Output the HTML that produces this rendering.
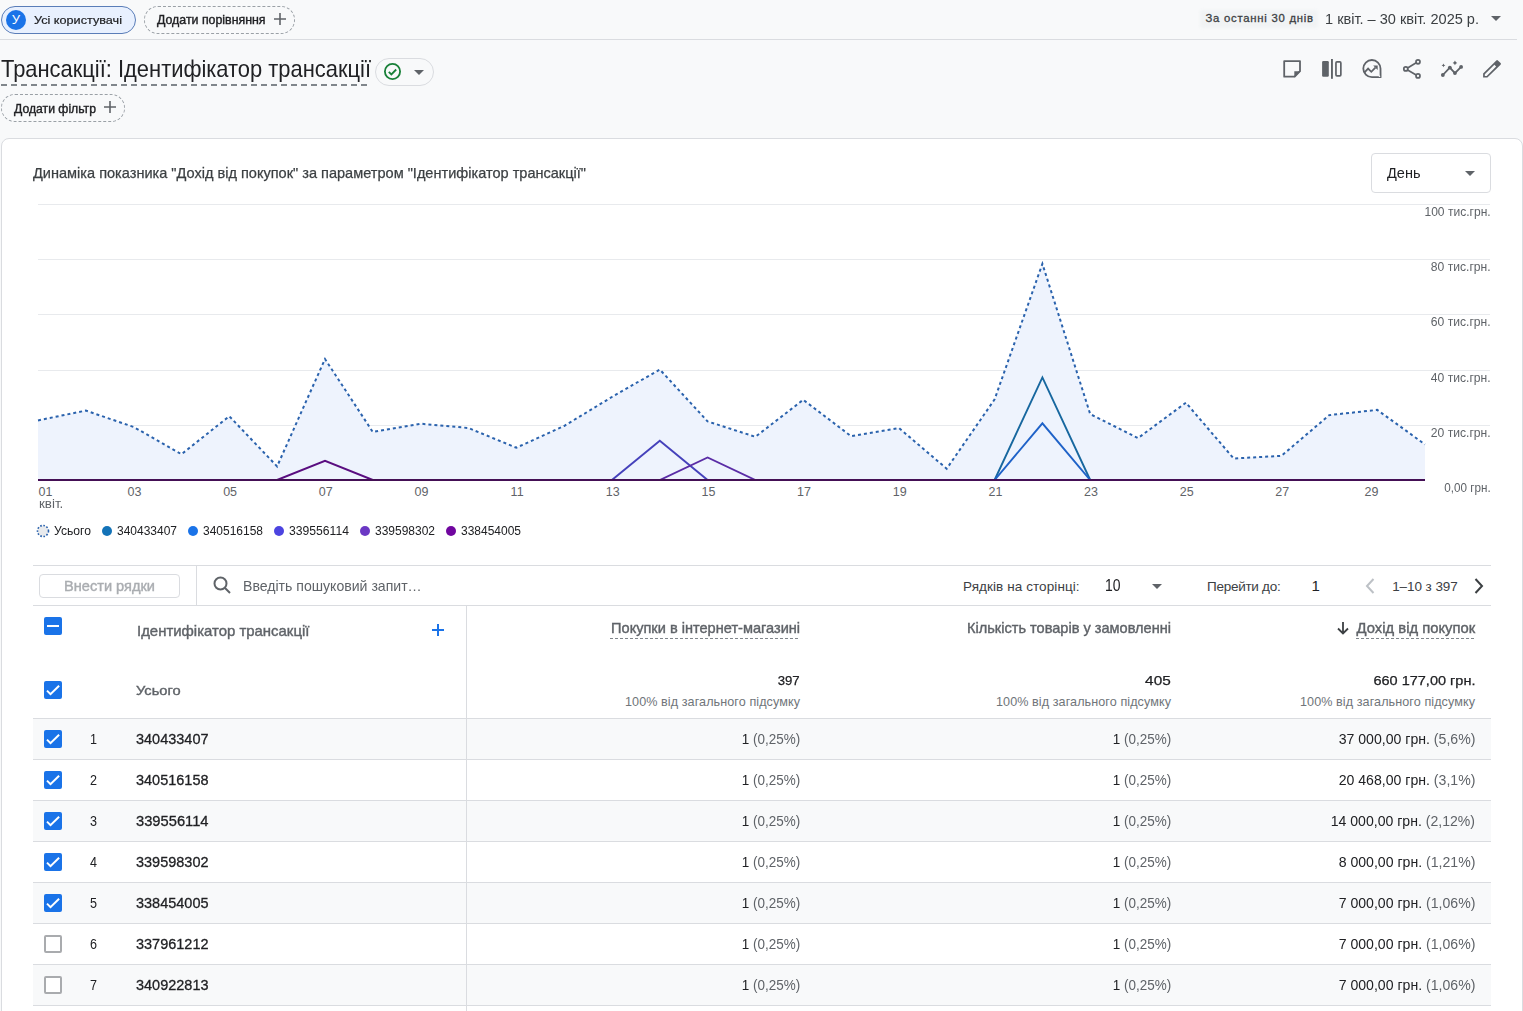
<!DOCTYPE html>
<html><head><meta charset="utf-8"><style>
*{box-sizing:border-box;margin:0;padding:0}
html,body{width:1523px;height:1011px;overflow:hidden;background:#f8f9fa;font-family:"Liberation Sans",sans-serif;color:#202124}
.a{position:absolute;white-space:nowrap}
.chipd{position:absolute;border:1px dashed #9aa0a6;border-radius:14px}
.cb{position:absolute;left:44px;width:18px;height:18px;border-radius:2px;background:#1a73e8}
.cbo{position:absolute;left:44px;width:18px;height:18px;border-radius:2px;border:2px solid #a9abae;background:#fff}
</style></head><body>
<div class="a" style="left:1px;top:6px;width:135px;height:28px;border:1px solid #5a7db8;border-radius:14px;background:#e8f0fe"></div>
<div class="a" style="left:6px;top:10px;width:20px;height:20px;border-radius:50%;background:#1a73e8"></div>
<div class="a" style="left:16px;transform:translateX(-50%);top:13px;font-size:13px;line-height:13px;color:#fff;font-weight:normal;">У</div>
<div class="a" style="left:34px;top:15px;font-size:11.5px;line-height:11.5px;color:#202124;font-weight:normal;transform:scaleX(1.1002);transform-origin:left center;-webkit-text-stroke:0.4px #202124;-webkit-text-stroke:0.2px #202124;">Усі користувачі</div>
<div class="chipd" style="left:144px;top:6px;width:151px;height:28px"></div>
<div class="a" style="left:157px;top:14px;font-size:12.8px;line-height:12.8px;color:#202124;font-weight:normal;transform:scaleX(0.9654);transform-origin:left center;-webkit-text-stroke:0.4px #202124;">Додати порівняння</div>
<svg class="a" style="left:273px;top:12px" width="14" height="14" viewBox="0 0 14 14"><path d="M7 1v12M1 7h12" stroke="#5f6368" stroke-width="1.6"/></svg>
<div class="a" style="left:0;top:39px;width:1517px;height:1px;background:#dadce0"></div>
<div class="a" style="left:1200px;top:10px;width:118px;height:18px;background:#f1f3f4;border-radius:3px;filter:blur(1.5px)"></div>
<div class="a" style="left:1205.5px;top:13px;font-size:11.3px;line-height:11.3px;color:#3c4043;font-weight:normal;letter-spacing:0.754px;-webkit-text-stroke:0.4px #3c4043;-webkit-text-stroke:0.3px #3c4043;">За останні 30 днів</div>
<div class="a" style="left:1324.5px;top:12px;font-size:14.5px;line-height:14.5px;color:#3c4043;font-weight:normal;transform:scaleX(1.0036);transform-origin:left center;">1 квіт. – 30 квіт. 2025 р.</div>
<svg class="a" style="left:1491px;top:16px" width="10" height="5" viewBox="0 0 10 5"><path d="M0 0h10L5 5z" fill="#5f6368"/></svg>
<div class="a" style="left:1px;top:57px;font-size:24px;line-height:24px;color:#202124;font-weight:normal;transform:scaleX(0.9126);transform-origin:left center;">Трансакції: Ідентифікатор трансакції</div>
<div class="a" style="left:1px;top:84px;width:370px;height:2px;background:repeating-linear-gradient(90deg,#80868b 0 6px,transparent 6px 10px)"></div>
<div class="a" style="left:375px;top:58px;width:59px;height:28px;border:1px solid #dadce0;border-radius:14px"></div>
<svg class="a" style="left:383px;top:62px" width="19" height="19" viewBox="0 0 20 20"><circle cx="10" cy="10" r="8" fill="none" stroke="#188038" stroke-width="1.9"/><path d="M6.1 10.3l2.7 2.7 5.1-5.1" fill="none" stroke="#188038" stroke-width="1.9"/></svg>
<svg class="a" style="left:414px;top:70px" width="10" height="5" viewBox="0 0 10 5"><path d="M0 0h10L5 5z" fill="#5f6368"/></svg>
<div class="chipd" style="left:1px;top:94px;width:124px;height:28px"></div>
<div class="a" style="left:14px;top:102px;font-size:13px;line-height:13px;color:#202124;font-weight:normal;transform:scaleX(0.9385);transform-origin:left center;-webkit-text-stroke:0.4px #202124;">Додати фільтр</div>
<svg class="a" style="left:103px;top:100px" width="14" height="14" viewBox="0 0 14 14"><path d="M7 1v12M1 7h12" stroke="#5f6368" stroke-width="1.6"/></svg>
<svg class="a" style="left:1280px;top:56px" width="24" height="24" viewBox="0 0 24 24"><path d="M4.2 5.1H20V15.2L14.7 20.7H4.2Z" fill="none" stroke="#5f6368" stroke-width="1.8" stroke-linejoin="round"/><path d="M14.3 15.2H20.6L14.3 21.5Z" fill="#5f6368"/></svg>
<svg class="a" style="left:1320px;top:56px" width="24" height="24" viewBox="0 0 24 24"><rect x="2.1" y="5.1" width="6.7" height="15.6" rx="1.2" fill="#5f6368"/><rect x="11" y="3" width="1.9" height="19.8" fill="#5f6368"/><rect x="15.95" y="5.95" width="4.9" height="13.9" rx="1" fill="none" stroke="#5f6368" stroke-width="1.7"/></svg>
<svg class="a" style="left:1360px;top:56px" width="24" height="24" viewBox="0 0 24 24"><path d="M20.5 12.6A8.6 8.6 0 1 0 11.9 21.2H20.6Z" fill="none" stroke="#5f6368" stroke-width="1.8" stroke-linejoin="round"/><path d="M4.3 16.6L8.1 12.6 11.3 15.8 15.4 11.6" fill="none" stroke="#5f6368" stroke-width="1.8"/><path d="M13.2 9.4H17.7V13.9Z" fill="#5f6368"/><circle cx="19.5" cy="20.3" r="0.8" fill="#fff"/></svg>
<svg class="a" style="left:1400px;top:56px" width="24" height="24" viewBox="0 0 24 24"><circle cx="18" cy="5.8" r="2" fill="none" stroke="#5f6368" stroke-width="1.7"/><circle cx="5.8" cy="12.9" r="2" fill="none" stroke="#5f6368" stroke-width="1.7"/><circle cx="18" cy="19.9" r="2" fill="none" stroke="#5f6368" stroke-width="1.7"/><path d="M7.6 11.9L16.2 6.8M7.6 13.9L16.2 18.9" stroke="#5f6368" stroke-width="1.7"/></svg>
<svg class="a" style="left:1440px;top:56px" width="24" height="24" viewBox="0 0 24 24"><path d="M2.85 19L9.85 11.6 14.95 17.1 21.1 10.9" fill="none" stroke="#5f6368" stroke-width="1.8"/><circle cx="2.85" cy="19" r="1.9" fill="#5f6368"/><circle cx="9.85" cy="11.6" r="1.9" fill="#5f6368"/><circle cx="14.95" cy="17.1" r="1.9" fill="#5f6368"/><circle cx="21.1" cy="10.9" r="1.9" fill="#5f6368"/><path d="M14.95 4.6Q15.5 6.35 17.25 6.9Q15.5 7.45 14.95 9.2Q14.4 7.45 12.65 6.9Q14.4 6.35 14.95 4.6Z" fill="#5f6368"/><path d="M3.45 7.5Q3.7 9.15 5.35 9.4Q3.7 9.65 3.45 11.3Q3.2 9.65 1.55 9.4Q3.2 9.15 3.45 7.5Z" fill="#5f6368"/></svg>
<svg class="a" style="left:1480px;top:56px" width="24" height="24" viewBox="0 0 24 24"><path fill-rule="evenodd" d="M3.1 17.6L16.3 4.4Q17.1 3.6 17.9 4.4L20.6 7.1Q21.4 7.9 20.6 8.7L7.4 21.6H3.1ZM4.8 19.9V18.25L14.375 8.675L16.15 10.45L6.7 19.9Z" fill="#5f6368"/></svg>
<div class="a" style="left:1px;top:138px;width:1522px;height:900px;background:#fff;border:1px solid #dadce0;border-radius:8px"></div>
<div class="a" style="left:33px;top:165px;font-size:15px;line-height:15px;color:#3c4043;font-weight:normal;transform:scaleX(0.9696);transform-origin:left center;-webkit-text-stroke:0.4px #3c4043;-webkit-text-stroke:0.25px #3c4043;">Динаміка показника "Дохід від покупок" за параметром "Ідентифікатор трансакції"</div>
<div class="a" style="left:1371px;top:153px;width:120px;height:40px;border:1px solid #dadce0;border-radius:4px"></div>
<div class="a" style="left:1387px;top:165px;font-size:15.5px;line-height:15.5px;color:#202124;font-weight:normal;transform:scaleX(0.9367);transform-origin:left center;">День</div>
<svg class="a" style="left:1465px;top:171px" width="10" height="5" viewBox="0 0 10 5"><path d="M0 0h10L5 5z" fill="#5f6368"/></svg>
<svg class="a" style="left:0;top:0" width="1523" height="560"><line x1="38" y1="204.5" x2="1490" y2="204.5" stroke="#e8eaed" stroke-width="1"/><line x1="38" y1="259.5" x2="1490" y2="259.5" stroke="#e8eaed" stroke-width="1"/><line x1="38" y1="314.5" x2="1490" y2="314.5" stroke="#e8eaed" stroke-width="1"/><line x1="38" y1="370.5" x2="1490" y2="370.5" stroke="#e8eaed" stroke-width="1"/><line x1="38" y1="425.5" x2="1490" y2="425.5" stroke="#e8eaed" stroke-width="1"/><polygon points="38,480 38.0,420.4 85.8,410.6 133.7,427.0 181.5,454.2 229.3,416.2 277.1,466.4 325.0,359.0 372.8,432.0 420.6,423.7 468.4,428.0 516.3,447.7 564.1,426.0 611.9,397.0 659.8,369.5 707.6,421.4 755.4,436.8 803.2,399.8 851.1,436.2 898.9,428.0 946.7,468.7 994.6,399.4 1042.4,263.8 1090.2,414.1 1138.0,438.1 1185.9,402.7 1233.7,458.5 1281.5,455.8 1329.3,415.1 1377.2,409.9 1425.0,444.4 1425,480" fill="#eef3fd"/><polyline points="38.0,420.4 85.8,410.6 133.7,427.0 181.5,454.2 229.3,416.2 277.1,466.4 325.0,359.0 372.8,432.0 420.6,423.7 468.4,428.0 516.3,447.7 564.1,426.0 611.9,397.0 659.8,369.5 707.6,421.4 755.4,436.8 803.2,399.8 851.1,436.2 898.9,428.0 946.7,468.7 994.6,399.4 1042.4,263.8 1090.2,414.1 1138.0,438.1 1185.9,402.7 1233.7,458.5 1281.5,455.8 1329.3,415.1 1377.2,409.9 1425.0,444.4" fill="none" stroke="#2a62ad" stroke-width="2" stroke-dasharray="3 3"/><polyline points="38.0,480.0 85.8,480.0 133.7,480.0 181.5,480.0 229.3,480.0 277.1,480.0 325.0,480.0 372.8,480.0 420.6,480.0 468.4,480.0 516.3,480.0 564.1,480.0 611.9,480.0 659.8,480.0 707.6,480.0 755.4,480.0 803.2,480.0 851.1,480.0 898.9,480.0 946.7,480.0 994.6,480.0 1042.4,377.4 1090.2,480.0 1138.0,480.0 1185.9,480.0 1233.7,480.0 1281.5,480.0 1329.3,480.0 1377.2,480.0 1425.0,480.0" fill="none" stroke="#17679f" stroke-width="1.9"/><polyline points="38.0,480.0 85.8,480.0 133.7,480.0 181.5,480.0 229.3,480.0 277.1,480.0 325.0,480.0 372.8,480.0 420.6,480.0 468.4,480.0 516.3,480.0 564.1,480.0 611.9,480.0 659.8,480.0 707.6,480.0 755.4,480.0 803.2,480.0 851.1,480.0 898.9,480.0 946.7,480.0 994.6,480.0 1042.4,423.3 1090.2,480.0 1138.0,480.0 1185.9,480.0 1233.7,480.0 1281.5,480.0 1329.3,480.0 1377.2,480.0 1425.0,480.0" fill="none" stroke="#1f62c8" stroke-width="1.9"/><polyline points="38.0,480.0 85.8,480.0 133.7,480.0 181.5,480.0 229.3,480.0 277.1,480.0 325.0,480.0 372.8,480.0 420.6,480.0 468.4,480.0 516.3,480.0 564.1,480.0 611.9,480.0 659.8,440.8 707.6,480.0 755.4,480.0 803.2,480.0 851.1,480.0 898.9,480.0 946.7,480.0 994.6,480.0 1042.4,480.0 1090.2,480.0 1138.0,480.0 1185.9,480.0 1233.7,480.0 1281.5,480.0 1329.3,480.0 1377.2,480.0 1425.0,480.0" fill="none" stroke="#4541bb" stroke-width="1.9"/><polyline points="38.0,480.0 85.8,480.0 133.7,480.0 181.5,480.0 229.3,480.0 277.1,480.0 325.0,480.0 372.8,480.0 420.6,480.0 468.4,480.0 516.3,480.0 564.1,480.0 611.9,480.0 659.8,480.0 707.6,457.5 755.4,480.0 803.2,480.0 851.1,480.0 898.9,480.0 946.7,480.0 994.6,480.0 1042.4,480.0 1090.2,480.0 1138.0,480.0 1185.9,480.0 1233.7,480.0 1281.5,480.0 1329.3,480.0 1377.2,480.0 1425.0,480.0" fill="none" stroke="#5a2ca6" stroke-width="1.9"/><polyline points="38.0,480.0 85.8,480.0 133.7,480.0 181.5,480.0 229.3,480.0 277.1,480.0 325.0,460.8 372.8,480.0 420.6,480.0 468.4,480.0 516.3,480.0 564.1,480.0 611.9,480.0 659.8,480.0 707.6,480.0 755.4,480.0 803.2,480.0 851.1,480.0 898.9,480.0 946.7,480.0 994.6,480.0 1042.4,480.0 1090.2,480.0 1138.0,480.0 1185.9,480.0 1233.7,480.0 1281.5,480.0 1329.3,480.0 1377.2,480.0 1425.0,480.0" fill="none" stroke="#5a0d80" stroke-width="1.9"/><line x1="38" y1="480" x2="1425" y2="480" stroke="#440f55" stroke-width="2"/></svg>
<div class="a" style="right:32.59999999999991px;top:206px;font-size:12.5px;line-height:12.5px;color:#5f6368;font-weight:normal;transform:scaleX(0.9642);transform-origin:right center;">100 тис.грн.</div>
<div class="a" style="right:32.59999999999991px;top:261px;font-size:12.5px;line-height:12.5px;color:#5f6368;font-weight:normal;transform:scaleX(0.9708);transform-origin:right center;">80 тис.грн.</div>
<div class="a" style="right:32.59999999999991px;top:316px;font-size:12.5px;line-height:12.5px;color:#5f6368;font-weight:normal;transform:scaleX(0.9708);transform-origin:right center;">60 тис.грн.</div>
<div class="a" style="right:32.59999999999991px;top:372px;font-size:12.5px;line-height:12.5px;color:#5f6368;font-weight:normal;transform:scaleX(0.9708);transform-origin:right center;">40 тис.грн.</div>
<div class="a" style="right:32.59999999999991px;top:427px;font-size:12.5px;line-height:12.5px;color:#5f6368;font-weight:normal;transform:scaleX(0.9708);transform-origin:right center;">20 тис.грн.</div>
<div class="a" style="right:32.59999999999991px;top:482px;font-size:12.5px;line-height:12.5px;color:#5f6368;font-weight:normal;transform:scaleX(0.9335);transform-origin:right center;">0,00 грн.</div>
<div class="a" style="left:38.5px;top:486px;font-size:12.5px;line-height:12.5px;color:#5f6368;font-weight:normal;">01</div>
<div class="a" style="left:38.5px;top:498px;font-size:12.5px;line-height:12.5px;color:#5f6368;font-weight:normal;transform:scaleX(1.0703);transform-origin:left center;">квіт.</div>
<div class="a" style="left:134.5px;transform:translateX(-50%);top:486px;font-size:12.5px;line-height:12.5px;color:#5f6368;font-weight:normal;">03</div>
<div class="a" style="left:230.1px;transform:translateX(-50%);top:486px;font-size:12.5px;line-height:12.5px;color:#5f6368;font-weight:normal;">05</div>
<div class="a" style="left:325.8px;transform:translateX(-50%);top:486px;font-size:12.5px;line-height:12.5px;color:#5f6368;font-weight:normal;">07</div>
<div class="a" style="left:421.4px;transform:translateX(-50%);top:486px;font-size:12.5px;line-height:12.5px;color:#5f6368;font-weight:normal;">09</div>
<div class="a" style="left:517.1px;transform:translateX(-50%);top:486px;font-size:12.5px;line-height:12.5px;color:#5f6368;font-weight:normal;">11</div>
<div class="a" style="left:612.7px;transform:translateX(-50%);top:486px;font-size:12.5px;line-height:12.5px;color:#5f6368;font-weight:normal;">13</div>
<div class="a" style="left:708.4px;transform:translateX(-50%);top:486px;font-size:12.5px;line-height:12.5px;color:#5f6368;font-weight:normal;">15</div>
<div class="a" style="left:804.0px;transform:translateX(-50%);top:486px;font-size:12.5px;line-height:12.5px;color:#5f6368;font-weight:normal;">17</div>
<div class="a" style="left:899.7px;transform:translateX(-50%);top:486px;font-size:12.5px;line-height:12.5px;color:#5f6368;font-weight:normal;">19</div>
<div class="a" style="left:995.4px;transform:translateX(-50%);top:486px;font-size:12.5px;line-height:12.5px;color:#5f6368;font-weight:normal;">21</div>
<div class="a" style="left:1091.0px;transform:translateX(-50%);top:486px;font-size:12.5px;line-height:12.5px;color:#5f6368;font-weight:normal;">23</div>
<div class="a" style="left:1186.7px;transform:translateX(-50%);top:486px;font-size:12.5px;line-height:12.5px;color:#5f6368;font-weight:normal;">25</div>
<div class="a" style="left:1282.3px;transform:translateX(-50%);top:486px;font-size:12.5px;line-height:12.5px;color:#5f6368;font-weight:normal;">27</div>
<div class="a" style="left:1371.5px;transform:translateX(-50%);top:486px;font-size:12.5px;line-height:12.5px;color:#5f6368;font-weight:normal;">29</div>
<svg class="a" style="left:36px;top:524px" width="14" height="14" viewBox="0 0 14 14"><circle cx="7" cy="7" r="5.5" fill="#e8eaed" stroke="#2a62ad" stroke-width="1.6" stroke-dasharray="1.6 1.6"/></svg>
<div class="a" style="left:54px;top:525px;font-size:12.5px;line-height:12.5px;color:#202124;font-weight:normal;transform:scaleX(0.9721);transform-origin:left center;">Усього</div>
<div class="a" style="left:102px;top:526px;width:10px;height:10px;border-radius:50%;background:#1373b8"></div>
<div class="a" style="left:117px;top:525px;font-size:12.5px;line-height:12.5px;color:#202124;font-weight:normal;transform:scaleX(0.9588);transform-origin:left center;">340433407</div>
<div class="a" style="left:188px;top:526px;width:10px;height:10px;border-radius:50%;background:#1a73e8"></div>
<div class="a" style="left:203px;top:525px;font-size:12.5px;line-height:12.5px;color:#202124;font-weight:normal;transform:scaleX(0.9588);transform-origin:left center;">340516158</div>
<div class="a" style="left:274px;top:526px;width:10px;height:10px;border-radius:50%;background:#4c44e0"></div>
<div class="a" style="left:289px;top:525px;font-size:12.5px;line-height:12.5px;color:#202124;font-weight:normal;transform:scaleX(0.9734);transform-origin:left center;">339556114</div>
<div class="a" style="left:360px;top:526px;width:10px;height:10px;border-radius:50%;background:#6b38c4"></div>
<div class="a" style="left:375px;top:525px;font-size:12.5px;line-height:12.5px;color:#202124;font-weight:normal;transform:scaleX(0.9588);transform-origin:left center;">339598302</div>
<div class="a" style="left:446px;top:526px;width:10px;height:10px;border-radius:50%;background:#70069f"></div>
<div class="a" style="left:461px;top:525px;font-size:12.5px;line-height:12.5px;color:#202124;font-weight:normal;transform:scaleX(0.9588);transform-origin:left center;">338454005</div>
<div class="a" style="left:33px;top:565px;width:1458px;height:1px;background:#dadce0"></div>
<div class="a" style="left:33px;top:605px;width:1458px;height:1px;background:#dadce0"></div>
<div class="a" style="left:196px;top:565px;width:1px;height:40px;background:#dadce0"></div>
<div class="a" style="left:39px;top:574px;width:141px;height:24px;border:1px solid #dadce0;border-radius:4px"></div>
<div class="a" style="left:64px;top:579px;font-size:14px;line-height:14px;color:#aaadb1;font-weight:normal;transform:scaleX(1.0422);transform-origin:left center;-webkit-text-stroke:0.4px #aaadb1;">Внести рядки</div>
<svg class="a" style="left:212px;top:575px" width="20" height="20" viewBox="0 0 20 20"><circle cx="8.5" cy="8.5" r="6" fill="none" stroke="#5f6368" stroke-width="2"/><path d="M13 13l5 5" stroke="#5f6368" stroke-width="2"/></svg>
<div class="a" style="left:243.3px;top:578px;font-size:15px;line-height:15px;color:#5f6368;font-weight:normal;transform:scaleX(0.9390);transform-origin:left center;">Введіть пошуковий запит…</div>
<div class="a" style="left:963px;top:580px;font-size:13.5px;line-height:13.5px;color:#3c4043;font-weight:normal;letter-spacing:0.087px;">Рядків на сторінці:</div>
<div class="a" style="left:1104.7px;top:578px;font-size:16px;line-height:16px;color:#202124;font-weight:normal;transform:scaleX(0.8709);transform-origin:left center;">10</div>
<svg class="a" style="left:1152px;top:584px" width="10" height="5" viewBox="0 0 10 5"><path d="M0 0h10L5 5z" fill="#5f6368"/></svg>
<div class="a" style="left:1207px;top:580px;font-size:13.5px;line-height:13.5px;color:#3c4043;font-weight:normal;letter-spacing:-0.269px;">Перейти до:</div>
<div class="a" style="left:1311.5px;top:578px;font-size:15px;line-height:15px;color:#202124;font-weight:normal;">1</div>
<svg class="a" style="left:1364px;top:577px" width="12" height="18" viewBox="0 0 12 18"><path d="M9.5 2L3 9l6.5 7" fill="none" stroke="#bdc1c6" stroke-width="2"/></svg>
<div class="a" style="left:1392.2px;top:580px;font-size:13.5px;line-height:13.5px;color:#3c4043;font-weight:normal;letter-spacing:-0.072px;">1–10 з 397</div>
<svg class="a" style="left:1473px;top:577px" width="12" height="18" viewBox="0 0 12 18"><path d="M2.5 2L9 9l-6.5 7" fill="none" stroke="#3c4043" stroke-width="2"/></svg>
<div class="cb" style="top:617px"><div style="position:absolute;left:3px;top:8px;width:12px;height:2px;background:#fff"></div></div>
<div class="a" style="left:136.6px;top:623px;font-size:15px;line-height:15px;color:#5f6368;font-weight:normal;transform:scaleX(0.9950);transform-origin:left center;-webkit-text-stroke:0.4px #5f6368;">Ідентифікатор трансакції</div>
<svg class="a" style="left:431px;top:623px" width="14" height="14" viewBox="0 0 14 14"><path d="M7 1v12M1 7h12" stroke="#1a73e8" stroke-width="2"/></svg>
<div class="a" style="right:723px;top:621px;font-size:14.5px;line-height:14.5px;color:#5f6368;font-weight:normal;transform:scaleX(1.0049);transform-origin:right center;-webkit-text-stroke:0.4px #5f6368;">Покупки в інтернет-магазині</div>
<div class="a" style="left:610px;top:638px;width:190px;height:1px;background:repeating-linear-gradient(90deg,#80868b 0 3px,transparent 3px 5px)"></div>
<div class="a" style="right:352px;top:621px;font-size:14.5px;line-height:14.5px;color:#5f6368;font-weight:normal;transform:scaleX(1.0047);transform-origin:right center;-webkit-text-stroke:0.4px #5f6368;">Кількість товарів у замовленні</div>
<div class="a" style="right:48px;top:621px;font-size:14.5px;line-height:14.5px;color:#5f6368;font-weight:normal;transform:scaleX(1.0206);transform-origin:right center;-webkit-text-stroke:0.4px #5f6368;">Дохід від покупок</div>
<div class="a" style="left:1356px;top:638px;width:119px;height:1px;background:repeating-linear-gradient(90deg,#80868b 0 3px,transparent 3px 5px)"></div>
<svg class="a" style="left:1336px;top:621px" width="14" height="14" viewBox="0 0 14 14"><path d="M7 1v11M2 7.5l5 5 5-5" fill="none" stroke="#3c4043" stroke-width="1.8"/></svg>
<div class="cb" style="top:681px"><svg style="position:absolute;left:0;top:0" width="18" height="18" viewBox="0 0 18 18"><path d="M3 9.6l3.5 3.5 8.6-8.4" fill="none" stroke="#fff" stroke-width="2"/></svg></div>
<div class="a" style="left:136.4px;top:684px;font-size:13.4px;line-height:13.4px;color:#5f6368;font-weight:normal;transform:scaleX(1.0936);transform-origin:left center;-webkit-text-stroke:0.4px #5f6368;">Усього</div>
<div class="a" style="right:723px;top:674px;font-size:13px;line-height:13px;color:#202124;font-weight:normal;transform:scaleX(1.0137);transform-origin:right center;-webkit-text-stroke:0.4px #202124;-webkit-text-stroke:0.25px #202124;">397</div>
<div class="a" style="right:723px;top:696px;font-size:12.6px;line-height:12.6px;color:#70757a;font-weight:normal;letter-spacing:0.079px;margin-right:-0.079px;">100% від загального підсумку</div>
<div class="a" style="right:352px;top:674px;font-size:13px;line-height:13px;color:#202124;font-weight:normal;transform:scaleX(1.1796);transform-origin:right center;-webkit-text-stroke:0.4px #202124;-webkit-text-stroke:0.25px #202124;">405</div>
<div class="a" style="right:352px;top:696px;font-size:12.6px;line-height:12.6px;color:#70757a;font-weight:normal;letter-spacing:0.079px;margin-right:-0.079px;">100% від загального підсумку</div>
<div class="a" style="right:48px;top:674px;font-size:13px;line-height:13px;color:#202124;font-weight:normal;transform:scaleX(1.1153);transform-origin:right center;-webkit-text-stroke:0.4px #202124;-webkit-text-stroke:0.25px #202124;">660 177,00 грн.</div>
<div class="a" style="right:48px;top:696px;font-size:12.6px;line-height:12.6px;color:#70757a;font-weight:normal;letter-spacing:0.079px;margin-right:-0.079px;">100% від загального підсумку</div>
<div class="a" style="left:33px;top:718px;width:1458px;height:1px;background:#dadce0"></div>
<div class="a" style="left:33px;top:719px;width:1458px;height:40px;background:#f8f9fa"></div>
<div class="a" style="left:33px;top:759px;width:1458px;height:1px;background:#dadce0"></div>
<div class="cb" style="top:730px"><svg style="position:absolute;left:0;top:0" width="18" height="18" viewBox="0 0 18 18"><path d="M3 9.6l3.5 3.5 8.6-8.4" fill="none" stroke="#fff" stroke-width="2"/></svg></div>
<div class="a" style="left:89.8px;top:731px;font-size:15.5px;line-height:15.5px;color:#202124;font-weight:normal;transform:scaleX(0.8116);transform-origin:left center;">1</div>
<div class="a" style="left:136.4px;top:731px;font-size:15.5px;line-height:15.5px;color:#202124;font-weight:normal;transform:scaleX(0.9344);transform-origin:left center;-webkit-text-stroke:0.4px #202124;-webkit-text-stroke:0.3px #202124;">340433407</div>
<div class="a" style="right:723px;top:731px;font-size:15.5px;line-height:15.5px;color:#202124;font-weight:normal;transform:scaleX(0.8688);transform-origin:right center;">1 <span style="color:#5f6368">(0,25%)</span></div>
<div class="a" style="right:352px;top:731px;font-size:15.5px;line-height:15.5px;color:#202124;font-weight:normal;transform:scaleX(0.8688);transform-origin:right center;">1 <span style="color:#5f6368">(0,25%)</span></div>
<div class="a" style="right:48px;top:731px;font-size:15.5px;line-height:15.5px;color:#202124;font-weight:normal;transform:scaleX(0.9091);transform-origin:right center;">37 000,00 грн. <span style="color:#5f6368">(5,6%)</span></div>
<div class="a" style="left:33px;top:800px;width:1458px;height:1px;background:#dadce0"></div>
<div class="cb" style="top:771px"><svg style="position:absolute;left:0;top:0" width="18" height="18" viewBox="0 0 18 18"><path d="M3 9.6l3.5 3.5 8.6-8.4" fill="none" stroke="#fff" stroke-width="2"/></svg></div>
<div class="a" style="left:89.8px;top:772px;font-size:15.5px;line-height:15.5px;color:#202124;font-weight:normal;transform:scaleX(0.8116);transform-origin:left center;">2</div>
<div class="a" style="left:136.4px;top:772px;font-size:15.5px;line-height:15.5px;color:#202124;font-weight:normal;transform:scaleX(0.9344);transform-origin:left center;-webkit-text-stroke:0.4px #202124;-webkit-text-stroke:0.3px #202124;">340516158</div>
<div class="a" style="right:723px;top:772px;font-size:15.5px;line-height:15.5px;color:#202124;font-weight:normal;transform:scaleX(0.8688);transform-origin:right center;">1 <span style="color:#5f6368">(0,25%)</span></div>
<div class="a" style="right:352px;top:772px;font-size:15.5px;line-height:15.5px;color:#202124;font-weight:normal;transform:scaleX(0.8688);transform-origin:right center;">1 <span style="color:#5f6368">(0,25%)</span></div>
<div class="a" style="right:48px;top:772px;font-size:15.5px;line-height:15.5px;color:#202124;font-weight:normal;transform:scaleX(0.9091);transform-origin:right center;">20 468,00 грн. <span style="color:#5f6368">(3,1%)</span></div>
<div class="a" style="left:33px;top:801px;width:1458px;height:40px;background:#f8f9fa"></div>
<div class="a" style="left:33px;top:841px;width:1458px;height:1px;background:#dadce0"></div>
<div class="cb" style="top:812px"><svg style="position:absolute;left:0;top:0" width="18" height="18" viewBox="0 0 18 18"><path d="M3 9.6l3.5 3.5 8.6-8.4" fill="none" stroke="#fff" stroke-width="2"/></svg></div>
<div class="a" style="left:89.8px;top:813px;font-size:15.5px;line-height:15.5px;color:#202124;font-weight:normal;transform:scaleX(0.8116);transform-origin:left center;">3</div>
<div class="a" style="left:136.4px;top:813px;font-size:15.5px;line-height:15.5px;color:#202124;font-weight:normal;transform:scaleX(0.9485);transform-origin:left center;-webkit-text-stroke:0.4px #202124;-webkit-text-stroke:0.3px #202124;">339556114</div>
<div class="a" style="right:723px;top:813px;font-size:15.5px;line-height:15.5px;color:#202124;font-weight:normal;transform:scaleX(0.8688);transform-origin:right center;">1 <span style="color:#5f6368">(0,25%)</span></div>
<div class="a" style="right:352px;top:813px;font-size:15.5px;line-height:15.5px;color:#202124;font-weight:normal;transform:scaleX(0.8688);transform-origin:right center;">1 <span style="color:#5f6368">(0,25%)</span></div>
<div class="a" style="right:48px;top:813px;font-size:15.5px;line-height:15.5px;color:#202124;font-weight:normal;transform:scaleX(0.9075);transform-origin:right center;">14 000,00 грн. <span style="color:#5f6368">(2,12%)</span></div>
<div class="a" style="left:33px;top:882px;width:1458px;height:1px;background:#dadce0"></div>
<div class="cb" style="top:853px"><svg style="position:absolute;left:0;top:0" width="18" height="18" viewBox="0 0 18 18"><path d="M3 9.6l3.5 3.5 8.6-8.4" fill="none" stroke="#fff" stroke-width="2"/></svg></div>
<div class="a" style="left:89.8px;top:854px;font-size:15.5px;line-height:15.5px;color:#202124;font-weight:normal;transform:scaleX(0.8116);transform-origin:left center;">4</div>
<div class="a" style="left:136.4px;top:854px;font-size:15.5px;line-height:15.5px;color:#202124;font-weight:normal;transform:scaleX(0.9344);transform-origin:left center;-webkit-text-stroke:0.4px #202124;-webkit-text-stroke:0.3px #202124;">339598302</div>
<div class="a" style="right:723px;top:854px;font-size:15.5px;line-height:15.5px;color:#202124;font-weight:normal;transform:scaleX(0.8688);transform-origin:right center;">1 <span style="color:#5f6368">(0,25%)</span></div>
<div class="a" style="right:352px;top:854px;font-size:15.5px;line-height:15.5px;color:#202124;font-weight:normal;transform:scaleX(0.8688);transform-origin:right center;">1 <span style="color:#5f6368">(0,25%)</span></div>
<div class="a" style="right:48px;top:854px;font-size:15.5px;line-height:15.5px;color:#202124;font-weight:normal;transform:scaleX(0.9091);transform-origin:right center;">8 000,00 грн. <span style="color:#5f6368">(1,21%)</span></div>
<div class="a" style="left:33px;top:883px;width:1458px;height:40px;background:#f8f9fa"></div>
<div class="a" style="left:33px;top:923px;width:1458px;height:1px;background:#dadce0"></div>
<div class="cb" style="top:894px"><svg style="position:absolute;left:0;top:0" width="18" height="18" viewBox="0 0 18 18"><path d="M3 9.6l3.5 3.5 8.6-8.4" fill="none" stroke="#fff" stroke-width="2"/></svg></div>
<div class="a" style="left:89.8px;top:895px;font-size:15.5px;line-height:15.5px;color:#202124;font-weight:normal;transform:scaleX(0.8116);transform-origin:left center;">5</div>
<div class="a" style="left:136.4px;top:895px;font-size:15.5px;line-height:15.5px;color:#202124;font-weight:normal;transform:scaleX(0.9344);transform-origin:left center;-webkit-text-stroke:0.4px #202124;-webkit-text-stroke:0.3px #202124;">338454005</div>
<div class="a" style="right:723px;top:895px;font-size:15.5px;line-height:15.5px;color:#202124;font-weight:normal;transform:scaleX(0.8688);transform-origin:right center;">1 <span style="color:#5f6368">(0,25%)</span></div>
<div class="a" style="right:352px;top:895px;font-size:15.5px;line-height:15.5px;color:#202124;font-weight:normal;transform:scaleX(0.8688);transform-origin:right center;">1 <span style="color:#5f6368">(0,25%)</span></div>
<div class="a" style="right:48px;top:895px;font-size:15.5px;line-height:15.5px;color:#202124;font-weight:normal;transform:scaleX(0.9091);transform-origin:right center;">7 000,00 грн. <span style="color:#5f6368">(1,06%)</span></div>
<div class="a" style="left:33px;top:964px;width:1458px;height:1px;background:#dadce0"></div>
<div class="cbo" style="top:935px"></div>
<div class="a" style="left:89.8px;top:936px;font-size:15.5px;line-height:15.5px;color:#202124;font-weight:normal;transform:scaleX(0.8116);transform-origin:left center;">6</div>
<div class="a" style="left:136.4px;top:936px;font-size:15.5px;line-height:15.5px;color:#202124;font-weight:normal;transform:scaleX(0.9344);transform-origin:left center;-webkit-text-stroke:0.4px #202124;-webkit-text-stroke:0.3px #202124;">337961212</div>
<div class="a" style="right:723px;top:936px;font-size:15.5px;line-height:15.5px;color:#202124;font-weight:normal;transform:scaleX(0.8688);transform-origin:right center;">1 <span style="color:#5f6368">(0,25%)</span></div>
<div class="a" style="right:352px;top:936px;font-size:15.5px;line-height:15.5px;color:#202124;font-weight:normal;transform:scaleX(0.8688);transform-origin:right center;">1 <span style="color:#5f6368">(0,25%)</span></div>
<div class="a" style="right:48px;top:936px;font-size:15.5px;line-height:15.5px;color:#202124;font-weight:normal;transform:scaleX(0.9091);transform-origin:right center;">7 000,00 грн. <span style="color:#5f6368">(1,06%)</span></div>
<div class="a" style="left:33px;top:965px;width:1458px;height:40px;background:#f8f9fa"></div>
<div class="a" style="left:33px;top:1005px;width:1458px;height:1px;background:#dadce0"></div>
<div class="cbo" style="top:976px"></div>
<div class="a" style="left:89.8px;top:977px;font-size:15.5px;line-height:15.5px;color:#202124;font-weight:normal;transform:scaleX(0.8116);transform-origin:left center;">7</div>
<div class="a" style="left:136.4px;top:977px;font-size:15.5px;line-height:15.5px;color:#202124;font-weight:normal;transform:scaleX(0.9344);transform-origin:left center;-webkit-text-stroke:0.4px #202124;-webkit-text-stroke:0.3px #202124;">340922813</div>
<div class="a" style="right:723px;top:977px;font-size:15.5px;line-height:15.5px;color:#202124;font-weight:normal;transform:scaleX(0.8688);transform-origin:right center;">1 <span style="color:#5f6368">(0,25%)</span></div>
<div class="a" style="right:352px;top:977px;font-size:15.5px;line-height:15.5px;color:#202124;font-weight:normal;transform:scaleX(0.8688);transform-origin:right center;">1 <span style="color:#5f6368">(0,25%)</span></div>
<div class="a" style="right:48px;top:977px;font-size:15.5px;line-height:15.5px;color:#202124;font-weight:normal;transform:scaleX(0.9091);transform-origin:right center;">7 000,00 грн. <span style="color:#5f6368">(1,06%)</span></div>
<div class="a" style="left:466px;top:605px;width:1px;height:406px;background:#dadce0"></div>
</body></html>
